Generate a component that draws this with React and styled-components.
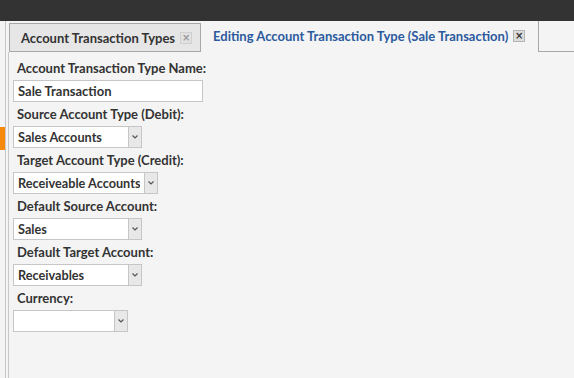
import React from "react";
import styled, { createGlobalStyle } from "styled-components";

const Global = createGlobalStyle`
  html, body { margin: 0; padding: 0; background: #f4f4f4; }
  body { font-family: Lato, "Open Sans", sans-serif; }
  #root { width: 574px; height: 378px; overflow: hidden; }
`;

const Page = styled.div`
  display: flex;
  flex-direction: column;
  width: 574px;
  height: 378px;
  background: #f4f4f4;
`;

const TopBar = styled.div`
  height: 21px;
  background: #333333;
  flex: none;
`;

const Main = styled.div`
  flex: 1;
  display: flex;
  min-height: 0;
`;

const SideStrip = styled.div`
  width: 5px;
  border-right: 1px solid #c8c8c8;
  background: #f4f4f4;
  display: flex;
  flex-direction: column;
  flex: none;
`;

const Marker = styled.div`
  margin-top: 106px;
  width: 5px;
  height: 23px;
  background: #f7890c;
`;

const Workspace = styled.div`
  flex: 1;
  margin-left: 2px;
  display: flex;
  flex-direction: column;
  min-width: 0;
`;

const TabRow = styled.div`
  height: 31px;
  display: flex;
  align-items: flex-end;
  flex: none;
`;

const Tab = styled.div`
  box-sizing: border-box;
  display: flex;
  align-items: center;
  gap: 5px;
  height: ${(p) => (p.$active ? "31px" : "29px")};
  padding: ${(p) => (p.$active ? "0 13px 1px 12px" : "0 8px 0 11px")};
  margin-left: ${(p) => (p.$active ? "0" : "1px")};
  background: ${(p) => (p.$active ? "#f4f4f4" : "#e6e6e6")};
  border: ${(p) => (p.$active ? "none" : "1px solid #a8a8a8")};
  border-right: 1px solid #a8a8a8;
  color: ${(p) => (p.$active ? "#2b5a9e" : "#333333")};
  font-weight: 700;
  font-size: 13px;
  white-space: nowrap;
`;

const CloseBox = styled.span`
  box-sizing: border-box;
  width: 12px;
  height: 12px;
  display: inline-flex;
  align-items: center;
  justify-content: center;
  border: 1px solid ${(p) => (p.$active ? "#b5b5b5" : "#d0d0d0")};
  background: ${(p) => (p.$active ? "#dcdcdc" : "#e2e2e2")};
  color: ${(p) => (p.$active ? "#333" : "#999")};
  font-size: 10px;
  font-weight: 700;
  line-height: 1;
  font-family: "DejaVu Sans", sans-serif;
`;

const TabFiller = styled.div`
  flex: 1;
  border-bottom: 1px solid #a8a8a8;
  align-self: stretch;
  margin-top: 1px;
`;

const Panel = styled.div`
  flex: 1;
  border-left: 1px solid #c8c8c8;
  padding: 6px 4px 0 4px;
  display: flex;
  flex-direction: column;
  gap: 2px;
`;

const Field = styled.div`
  display: flex;
  flex-direction: column;
  align-items: flex-start;
  gap: 2px;
`;

const Label = styled.div`
  height: 20px;
  line-height: 21px;
  padding-left: 4px;
  font-size: 13px;
  font-weight: 700;
  color: #333333;
`;

const TextBox = styled.div`
  box-sizing: border-box;
  width: ${(p) => p.$w}px;
  height: 22px;
  border: 1px solid #c6c6c6;
  background: #ffffff;
  padding-left: 4px;
  display: flex;
  align-items: center;
  font-size: 13px;
  font-weight: 700;
  color: #333333;
`;

const SelectBox = styled(TextBox)`
  padding-left: 0;
  justify-content: space-between;
`;

const SelectValue = styled.span`
  padding-left: 4px;
  white-space: nowrap;
  overflow: hidden;
  font-size: 12.7px;
`;

const DropButton = styled.span`
  box-sizing: border-box;
  width: 13px;
  height: 100%;
  background: #e8e8e8;
  border-left: 1px solid #c6c6c6;
  display: flex;
  align-items: center;
  justify-content: center;
  flex: none;
`;

const Chevron = () => (
  <svg width="6" height="4" viewBox="0 0 6 4">
    <polyline points="0.5,0.5 3,3 5.5,0.5" fill="none" stroke="#555" strokeWidth="1.2" />
  </svg>
);

const Select = ({ w, value }) => (
  <SelectBox $w={w}>
    <SelectValue>{value}</SelectValue>
    <DropButton>
      <Chevron />
    </DropButton>
  </SelectBox>
);

export default function App() {
  return (
    <Page>
      <Global />
      <TopBar />
      <Main>
        <SideStrip>
          <Marker />
        </SideStrip>
        <Workspace>
          <TabRow>
            <Tab>
              Account Transaction Types
              <CloseBox>×</CloseBox>
            </Tab>
            <Tab $active>
              Editing Account Transaction Type (Sale Transaction)
              <CloseBox $active>×</CloseBox>
            </Tab>
            <TabFiller />
          </TabRow>
          <Panel>
            <Field>
              <Label>Account Transaction Type Name:</Label>
              <TextBox $w={190}>Sale Transaction</TextBox>
            </Field>
            <Field>
              <Label>Source Account Type (Debit):</Label>
              <Select w={129} value="Sales Accounts" />
            </Field>
            <Field>
              <Label>Target Account Type (Credit):</Label>
              <Select w={145} value="Receiveable Accounts" />
            </Field>
            <Field>
              <Label>Default Source Account:</Label>
              <Select w={129} value="Sales" />
            </Field>
            <Field>
              <Label>Default Target Account:</Label>
              <Select w={129} value="Receivables" />
            </Field>
            <Field>
              <Label>Currency:</Label>
              <Select w={115} value="" />
            </Field>
          </Panel>
        </Workspace>
      </Main>
    </Page>
  );
}
